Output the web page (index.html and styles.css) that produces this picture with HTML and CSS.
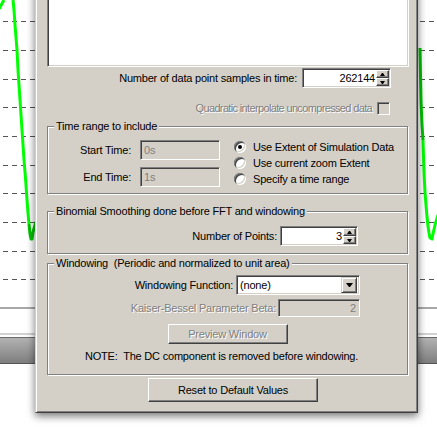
FILE: index.html
```html
<!DOCTYPE html>
<html lang="en">
<head>
  <meta charset="UTF-8" />
  <title>FFT Settings</title>
  <link rel="stylesheet" href="styles.css">
</head>
<body>

  <!-- Plot canvas behind the dialog -->
  <div class="plot">
    <svg class="plot-svg" width="437" height="427" viewBox="0 0 437 427">
      <defs>
        <linearGradient id="barShade" x1="0" y1="0" x2="0" y2="1">
          <stop offset="0" stop-color="#b2b2b2"/>
          <stop offset="1" stop-color="#7e7e7e"/>
        </linearGradient>
      </defs>

      <!-- dashed grid -->
      <path class="grid" d="M3 21.5H36M3 50.5H36M3 79.5H36M3 107.5H36M3 136.5H36M3 165.5H36M3 193.5H36M3 222.5H36M3 251.5H36M3 279.5H36"/>
      <path class="grid" d="M420 21.5H437M420 50.5H437M420 79.5H437M420 107.5H437M420 136.5H437M420 165.5H437M420 193.5H437M420 222.5H437M420 251.5H437M420 279.5H437"/>

      <!-- bars under the plot -->
      <rect x="0" y="307" width="437" height="2" fill="#a8a8a8"/>
      <rect x="0" y="333" width="437" height="2" fill="#d2d2d2"/>
      <rect x="0" y="337" width="437" height="1" fill="#6a6a6a"/>
      <rect x="0" y="338" width="437" height="25" fill="url(#barShade)"/>
      <rect x="0" y="363" width="437" height="1" fill="#555"/>

      <!-- signal trace -->
      <path class="trace" d="M-1 9L4 0"/>
      <path class="trace" d="M13 0L14 10L15 25L17 50L18 70L19 85L20 100L21 115L22 130L23 145L24 160L25 172L26 185L27 200L28 213L29 224"/>
      <path class="trace dark" d="M29 224L30 234L31 239L32 239L33 232L36 222"/>
      <path class="trace dark" d="M420 48L420.5 75L421 100L422 125L423 140"/>
      <path class="trace" d="M423 140L424 172L425 192L426 205L427 217L428 226L429 233L430 238L432 239L433 234L435 225L438 215"/>
    </svg>

    <!-- Settings dialog -->
    <div class="dialog">
      <div class="listbox inset"></div>

      <div class="row row-samples">
        <span>Number of data point samples in time:</span>
        <div class="field inset spin-field samples-field">
          <span class="value">262144</span>
          <span class="spinner">
            <span class="spin-btn up"></span>
            <span class="spin-btn down"></span>
          </span>
        </div>
      </div>

      <div class="row row-quad">
        <span class="disabled quad-label">Quadratic interpolate uncompressed data</span>
        <span class="checkbox inset"></span>
      </div>

      <fieldset class="group group-time">
        <legend>Time range to include</legend>
        <div class="time-body">
          <div class="time-fields">
            <span class="time-label">Start Time:</span>
            <div class="field inset field-off">0s</div>
            <span class="time-label">End Time:</span>
            <div class="field inset field-off">1s</div>
          </div>
          <div class="radios">
            <div class="radio-row"><span class="radio checked"></span>Use Extent of Simulation Data</div>
            <div class="radio-row"><span class="radio"></span>Use current zoom Extent</div>
            <div class="radio-row"><span class="radio"></span>Specify a time range</div>
          </div>
        </div>
      </fieldset>

      <fieldset class="group group-smooth">
        <legend>Binomial Smoothing done before FFT and windowing</legend>
        <div class="row row-points">
          <span>Number of Points:</span>
          <div class="field inset spin-field points-field">
            <span class="value">3</span>
            <span class="spinner">
              <span class="spin-btn up"></span>
              <span class="spin-btn down"></span>
            </span>
          </div>
        </div>
      </fieldset>

      <fieldset class="group group-window">
        <legend>Windowing&nbsp; (Periodic and normalized to unit area)</legend>
        <div class="row row-select">
          <span>Windowing Function:</span>
          <div class="field inset select-field">
            <span class="value-left">(none)</span>
            <span class="drop-btn"></span>
          </div>
        </div>
        <div class="row row-kaiser">
          <span class="disabled">Kaiser-Bessel Parameter Beta:</span>
          <div class="field inset field-off kaiser-field">2</div>
        </div>
        <div class="btn preview-btn"><span class="disabled">Preview Window</span></div>
        <div class="note">NOTE:&nbsp; The DC component is removed before windowing.</div>
      </fieldset>

      <div class="btn reset-btn">Reset to Default Values</div>
    </div>
  </div>

</body>
</html>
```

FILE: styles.css
```css
/* Page is the plot canvas; the dialog floats on top of it */
body {
  margin: 0;
  width: 437px;
  height: 427px;
  overflow: hidden;
  background: #fff;
  font-family: "Liberation Sans", Arial, sans-serif;
  font-size: 11px;
  line-height: 13px;
  letter-spacing: -0.2px;
  color: #000;
}

.plot {
  position: relative;
  width: 437px;
  height: 427px;
}

.plot-svg {
  display: block;
}

.grid {
  fill: none;
  stroke: #555;
  stroke-dasharray: 5 4;
}

.trace {
  fill: none;
  stroke: #00ff00;
  stroke-width: 3;
  stroke-linejoin: round;
}

.trace.dark {
  stroke: #00c400;
}

/* Classic grey dialog window */
.dialog {
  position: absolute;
  left: 35px;
  top: -30px;
  width: 383px;
  box-sizing: border-box;
  padding: 0 9px 10px 11px;
  background: #d4d0c8;
  border: 1px solid;
  border-color: #d4d0c8 #404040 #404040 #d4d0c8;
  box-shadow: inset 1px 1px #fff, inset -1px -1px #808080, 0 3px 8px rgba(0, 0, 0, 0.55);
}

/* Sunken 3D border used by edit fields */
.inset {
  box-sizing: border-box;
  border: 1px solid;
  border-color: #808080 #fff #fff #808080;
  box-shadow: inset 1px 1px #404040, inset -1px -1px #d4d0c8;
}

.listbox {
  height: 96px;
  margin-right: -1px;
  background: #fff;
}

.disabled {
  color: #808080;
  text-shadow: 1px 1px 0 #fff;
}

.row {
  display: flex;
  align-items: center;
  justify-content: flex-end;
}

.row-samples {
  height: 20px;
  margin-top: 1px;
  padding-right: 17px;
  gap: 5px;
}

.row-quad {
  height: 13px;
  margin-top: 14px;
  padding-right: 18px;
  gap: 5px;
}

.quad-label {
  letter-spacing: -0.65px;
}

.checkbox {
  width: 13px;
  height: 13px;
  background: #d4d0c8;
}

/* Edit fields */
.field {
  display: flex;
  align-items: center;
  height: 20px;
  padding: 2px;
  background: #fff;
}

.field-off {
  background: #d4d0c8;
  color: #808080;
  padding-left: 3px;
}

.spin-field {
  padding-right: 1px;
}

.spin-field .value {
  flex: 1;
  text-align: right;
  padding-right: 1px;
}

.samples-field {
  width: 89px;
}

.points-field {
  width: 78px;
}

.spinner {
  display: flex;
  flex-direction: column;
  width: 13px;
  height: 16px;
}

.spin-btn {
  flex: 1;
  display: flex;
  align-items: center;
  justify-content: center;
  box-sizing: border-box;
  background: #d4d0c8;
  border: 1px solid;
  border-color: #fff #404040 #404040 #fff;
  box-shadow: inset -1px -1px #808080;
}

.spin-btn::after {
  content: "";
  width: 1px;
  border-left: 2px solid transparent;
  border-right: 2px solid transparent;
}

.spin-btn.up::after {
  border-bottom: 3px solid #000;
}

.spin-btn.down::after {
  border-top: 3px solid #000;
}

/* Group boxes with etched frame */
.group {
  margin: 0;
  padding: 0;
  min-width: 0;
  border: 1px solid #808080;
  box-shadow: 1px 1px #fff, inset 1px 1px #fff;
}

.group legend {
  margin-left: 6px;
  padding: 0 2px;
  background: #d4d0c8;
}

.group-time {
  margin-top: 5px;
  padding: 7px 0 6px;
}

.time-body {
  display: flex;
}

.time-fields {
  display: grid;
  grid-template-columns: 83px 80px;
  column-gap: 9px;
  row-gap: 7px;
  align-items: center;
}

.time-label {
  text-align: right;
}

.radios {
  margin: -1px 0 0 14px;
}

.radio-row {
  display: flex;
  align-items: center;
  gap: 7px;
  height: 16px;
}

.radio {
  position: relative;
  width: 12px;
  height: 12px;
  border-radius: 50%;
  background: #fff;
  box-shadow: inset 1px 1px #808080, inset -1px -1px #fff, inset 2px 2px #404040, inset -2px -2px #d4d0c8;
}

.radio.checked::after {
  content: "";
  position: absolute;
  left: 4px;
  top: 4px;
  width: 4px;
  height: 4px;
  border-radius: 50%;
  background: #000;
}

.group-smooth {
  margin-top: 11px;
  padding: 8px 0 7px;
}

.row-points {
  padding-right: 49px;
  gap: 3px;
}

.group-window {
  margin-top: 3px;
  padding: 5px 0 11px;
}

.row-select {
  padding-right: 47px;
  gap: 3px;
}

.select-field {
  width: 124px;
  padding-left: 3px;
}

.value-left {
  flex: 1;
}

.drop-btn {
  display: flex;
  align-items: center;
  justify-content: center;
  width: 16px;
  height: 16px;
  box-sizing: border-box;
  background: #d4d0c8;
  border: 1px solid;
  border-color: #d4d0c8 #404040 #404040 #d4d0c8;
  box-shadow: inset 1px 1px #fff, inset -1px -1px #808080;
}

.drop-btn::after {
  content: "";
  width: 1px;
  border-left: 3px solid transparent;
  border-right: 3px solid transparent;
  border-top: 4px solid #000;
}

.row-kaiser {
  margin-top: 4px;
  padding-right: 47px;
  gap: 2px;
}

.kaiser-field {
  width: 82px;
  height: 18px;
  justify-content: flex-end;
  padding-right: 3px;
}

/* Push buttons */
.btn {
  display: flex;
  align-items: center;
  justify-content: center;
  box-sizing: border-box;
  background: #d4d0c8;
  border: 1px solid;
  border-color: #fff #404040 #404040 #fff;
  box-shadow: inset -1px -1px #808080;
}

.preview-btn {
  width: 120px;
  height: 20px;
  margin: 7px auto 0;
}

.note {
  margin-top: 6px;
  padding-left: 37px;
}

.reset-btn {
  width: 170px;
  height: 24px;
  margin: 3px 0 0 101px;
}
```
